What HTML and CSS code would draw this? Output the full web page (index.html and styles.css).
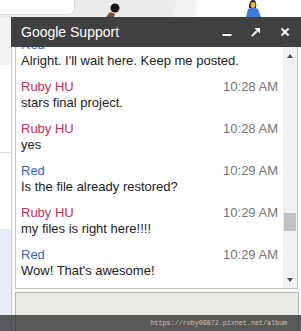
FILE: index.html
```html
<!DOCTYPE html>
<html lang="en">
<head>
  <meta charset="UTF-8" />
  <meta name="viewport" content="width=device-width, initial-scale=1.0" />
  <title>Google Support Chat</title>
  <link rel="stylesheet" href="styles.css">
</head>
<body>
  <div class="screen">
    <!-- Page behind the chat window -->
    <div class="backdrop">
      <div class="card-corner"></div>
      <svg class="figure figure-dark" width="14" height="17" viewBox="0 0 14 17">
        <path d="M0 17 L4 12 L9 14 L8 17 Z" fill="#7a4b35"/>
        <circle cx="9" cy="8" r="4.5" fill="#141414"/>
      </svg>
      <svg class="figure figure-blue" width="18" height="17" viewBox="0 0 18 17">
        <path d="M2 17 L4 9 Q9 6 14 9 L17 17 Z" fill="#3d7ddb"/>
        <path d="M5 8 Q5 0 9 0 Q13 0 12 8 Z" fill="#1a1a1a"/>
        <ellipse cx="9" cy="5" rx="2.5" ry="3" fill="#f2b632"/>
      </svg>
    </div>

    <div class="main">
      <aside class="side">
        <div class="side-top"></div>
        <div class="side-mid"></div>
        <div class="side-low"></div>
      </aside>

      <section class="chat">
        <header class="chat-head">
          <h1>Google Support</h1>
          <div class="head-actions">
            <svg width="10" height="10" viewBox="0 0 10 10"><rect x="0.5" y="7" width="9" height="2" fill="#fff"/></svg>
            <svg width="10" height="10" viewBox="0 0 10 10"><path d="M1 9 L6 4" stroke="#fff" stroke-width="2"/><path d="M3.5 1 H9 V6.5 Z" fill="#fff"/></svg>
            <svg width="10" height="10" viewBox="0 0 10 10"><path d="M1.5 1.5 L8.5 8.5 M8.5 1.5 L1.5 8.5" stroke="#fff" stroke-width="2"/></svg>
          </div>
        </header>

        <div class="chat-body">
          <div class="log">
            <div class="log-scroll">
              <div class="msg">
                <div class="msg-top"><span class="who agent">Red</span></div>
                <p>Alright. I'll wait here. Keep me posted.</p>
              </div>
              <div class="msg">
                <div class="msg-top"><span class="who user">Ruby HU</span><span class="time">10:28 AM</span></div>
                <p>stars final project.</p>
              </div>
              <div class="msg">
                <div class="msg-top"><span class="who user">Ruby HU</span><span class="time">10:28 AM</span></div>
                <p>yes</p>
              </div>
              <div class="msg">
                <div class="msg-top"><span class="who agent">Red</span><span class="time">10:29 AM</span></div>
                <p>Is the file already restored?</p>
              </div>
              <div class="msg">
                <div class="msg-top"><span class="who user">Ruby HU</span><span class="time">10:29 AM</span></div>
                <p>my files is right here!!!!</p>
              </div>
              <div class="msg">
                <div class="msg-top"><span class="who agent">Red</span><span class="time">10:29 AM</span></div>
                <p>Wow! That's awesome!</p>
              </div>
            </div>
            <div class="scrollbar">
              <div class="scroll-btn"><span class="arrow-up"></span></div>
              <div class="scroll-track"><div class="scroll-thumb"></div></div>
              <div class="scroll-btn"><span class="arrow-down"></span></div>
            </div>
          </div>
          <div class="compose"></div>
        </div>
      </section>
    </div>

    <div class="watermark">https://ruby09872.pixnet.net/album</div>
  </div>
</body>
</html>
```

FILE: styles.css
```css
/* Reset */
* { box-sizing: border-box; margin: 0; padding: 0; }
body { font-family: "Liberation Sans", Arial, sans-serif; background: #fff; color: #222; }

.screen { position: relative; width: 301px; height: 331px; overflow: hidden; }

/* Page behind the window */
.backdrop { position: relative; height: 17px; background: linear-gradient(100deg, #ebebeb 0 58%, #f3f3f3 58% 64%, #fff 66%); }
.card-corner { width: 75px; height: 15px; background: #fff; border: 1px solid #dedede; border-top: none; border-left: none; border-bottom-right-radius: 7px; }
.figure { position: absolute; top: 0; }
.figure-dark { left: 106px; }
.figure-blue { left: 244px; }

.main { display: flex; height: 314px; }
.side { width: 11px; display: flex; flex-direction: column; }
.side-top { height: 48px; background: #f3f3f3; }
.side-mid { height: 88px; background: #fff; border-bottom: 1px solid #dcdcdc; }
.side-low { flex: 1; background: linear-gradient(#fff 0 75px, #e8eef9 76px); }

/* Chat window */
.chat { flex: 1; display: flex; flex-direction: column; position: relative; z-index: 0; }
.chat-head { position: relative; z-index: 1; height: 30px; background: #404040; color: #fff; display: flex; align-items: center; justify-content: space-between; padding: 0 11px 0 10px; }
.chat-head h1 { font-size: 14px; font-weight: normal; }
.head-actions { display: flex; gap: 19px; }
.head-actions svg { display: block; }

.chat-body { flex: 1; display: flex; flex-direction: column; gap: 3px; background: #fafafa; border-left: 1px solid #c8c8c8; padding-left: 3px; }

/* Message log */
.log { height: 242px; display: flex; margin-right: 3px; background: #fff; border: 1px solid #c6c6c6; border-top: none; }
.log-scroll { flex: 1; overflow: hidden; padding: 0 5px; }
.log-scroll .msg:first-child { margin-top: -10px; }
.msg { margin-bottom: 10px; font-size: 13px; line-height: 16px; }
.msg-top { display: flex; justify-content: space-between; }
.who.user { color: #c2305e; }
.who.agent { color: #3466cc; }
.time { color: #777; }
.msg p { color: #222; }

/* Scrollbar */
.scrollbar { width: 14px; display: flex; flex-direction: column; background: #f1f1f1; }
.scroll-btn { height: 17px; display: flex; align-items: center; justify-content: center; }
.scroll-track { flex: 1; }
.scroll-thumb { margin: 149px 1px 0 1px; height: 18px; background: #c1c1c1; }
.arrow-up { border: 3.5px solid transparent; border-bottom: 4px solid #505050; border-top: none; }
.arrow-down { border: 3.5px solid transparent; border-top: 4px solid #505050; border-bottom: none; }

/* Input area */
.compose { flex: 1; margin-right: 2px; background: #ebeae4; border: 1px solid #b5b5b5; border-bottom: none; }

/* Watermark strip over the bottom */
.watermark { position: absolute; left: 0; right: 0; bottom: 0; height: 16px; background: rgba(40, 40, 40, 0.75); color: #c4c4c4; font-family: "Liberation Mono", monospace; font-size: 6.7px; line-height: 16px; text-align: right; padding-right: 14px; }
```
